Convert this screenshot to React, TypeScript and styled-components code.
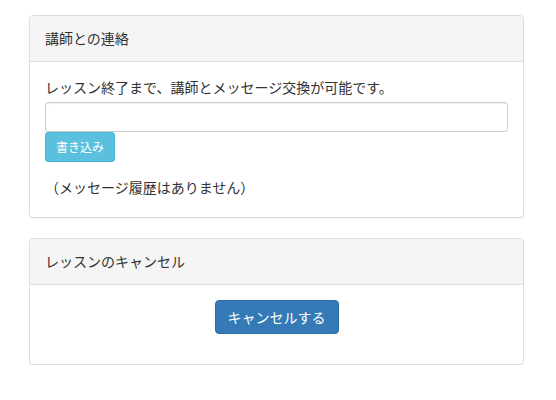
import { FC } from 'react'
import styled, { createGlobalStyle } from 'styled-components'

const GlobalStyle = createGlobalStyle`
  html, body {
    margin: 0;
    padding: 0;
    background: #fff;
  }
  body {
    font-family: 'Noto Sans CJK JP', 'Noto Sans', 'Liberation Sans', sans-serif;
    font-size: 14px;
    line-height: 20px;
    color: #333;
  }
  * {
    box-sizing: border-box;
  }
`

const StyledPage = styled.main`
  width: 495px;
  margin: 15px 0 0 29px;
  display: flex;
  flex-direction: column;
  gap: 20px;
`

const StyledPanel = styled.section`
  background: #fff;
  border: 1px solid #ddd;
  border-radius: 4px;
  box-shadow: 0 1px 1px rgba(0, 0, 0, 0.05);
`

const StyledHeading = styled.h3`
  margin: 0;
  padding: 12px 15px 13px;
  font-size: 14px;
  font-weight: normal;
  line-height: 20px;
  color: #333;
  background: #f5f5f5;
  border-bottom: 1px solid #ddd;
  border-radius: 3px 3px 0 0;
`

const StyledBody = styled.div<{ $center?: boolean }>`
  padding: 15px 15px ${({ $center }) => ($center ? '30px' : '20px')};
  display: flex;
  flex-direction: column;
  align-items: ${({ $center }) => ($center ? 'center' : 'flex-start')};
`

const StyledLabel = styled.label`
  display: block;
  margin-bottom: 5px;
`

const StyledInput = styled.input`
  width: 100%;
  height: 30px;
  padding: 5px 10px;
  font: inherit;
  border: 1px solid #ccc;
  border-radius: 3px;
  box-shadow: inset 0 1px 1px rgba(0, 0, 0, 0.075);
  outline: none;
`

const StyledButton = styled.button<{ $variant: 'info' | 'primary'; $small?: boolean }>`
  font-family: inherit;
  font-size: ${({ $small }) => ($small ? '12px' : '14px')};
  line-height: ${({ $small }) => ($small ? '18px' : '20px')};
  padding: ${({ $small }) => ($small ? '5px 10px' : '6px 12px')};
  color: #fff;
  border-radius: ${({ $small }) => ($small ? '3px' : '4px')};
  border: 1px solid ${({ $variant }) => ($variant === 'info' ? '#46b8da' : '#2e6da4')};
  background: ${({ $variant }) => ($variant === 'info' ? '#5bc0de' : '#337ab7')};
  cursor: pointer;
`

const StyledNote = styled.p`
  margin: 15px 0 0;
`

const App: FC = () => {
  return (
    <>
      <GlobalStyle />
      <StyledPage>
        <StyledPanel>
          <StyledHeading>講師との連絡</StyledHeading>
          <StyledBody>
            <StyledLabel htmlFor="message">レッスン終了まで、講師とメッセージ交換が可能です。</StyledLabel>
            <StyledInput id="message" type="text" />
            <StyledButton $variant="info" $small>
              書き込み
            </StyledButton>
            <StyledNote>（メッセージ履歴はありません）</StyledNote>
          </StyledBody>
        </StyledPanel>

        <StyledPanel>
          <StyledHeading>レッスンのキャンセル</StyledHeading>
          <StyledBody $center>
            <StyledButton $variant="primary">キャンセルする</StyledButton>
          </StyledBody>
        </StyledPanel>
      </StyledPage>
    </>
  )
}

export default App
